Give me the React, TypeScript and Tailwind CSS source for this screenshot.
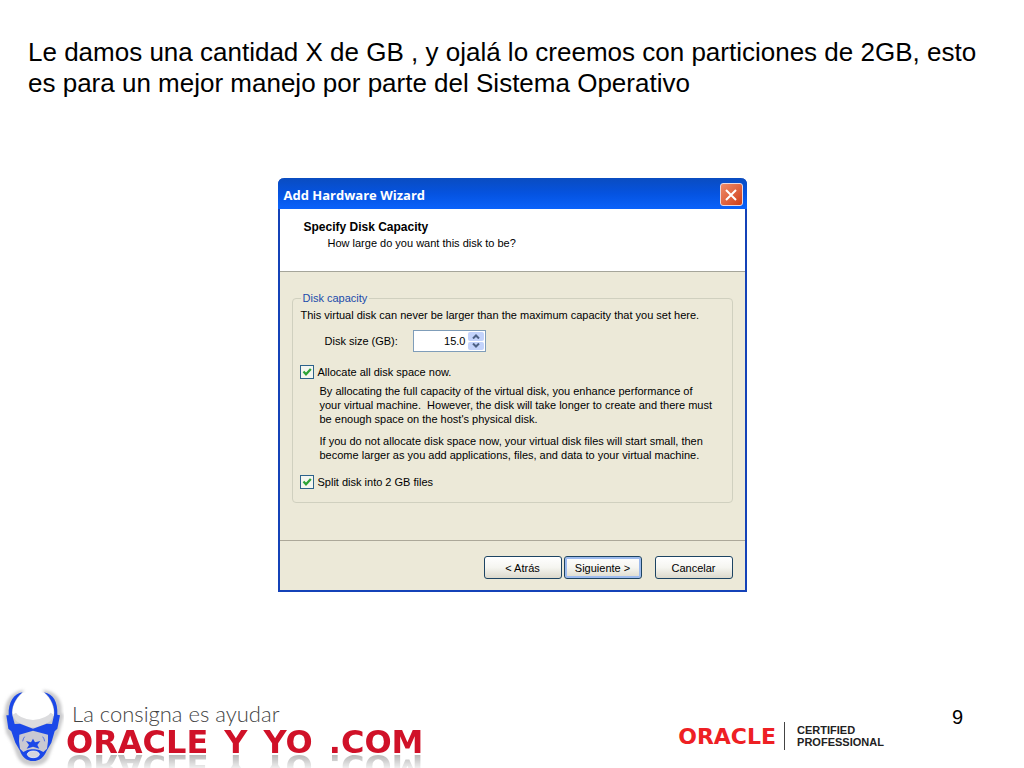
import { useState } from "react";

function Mascot() {
  return (
    <svg viewBox="0 0 192 264" className="h-[88px] w-16 shrink-0" role="img" aria-label="Oracle y yo">
      <defs>
        <filter id="halo" x="-20%" y="-20%" width="140%" height="140%">
          <feGaussianBlur stdDeviation="4" />
        </filter>
      </defs>
      <path
        d="M66 34C34 40 16 68 18 104L14 108L22 158L40 188L54 226C64 252 84 254 99 254C120 254 138 248 144 226L158 188L174 158L188 108L182 98C184 62 166 38 134 34L154 78L148 120L99 138L50 120L44 78Z"
        fill="#cacacc"
        stroke="#cacacc"
        strokeWidth="7"
        filter="url(#halo)"
      />
      <path d="M68 38C46 56 34 84 38 106L60 128L99 142L140 128L161 106C164 84 152 54 132 38Z" fill="#fff" />
      <path d="M38 104Q42 120 60 130L99 146L140 130Q158 120 161 104L152 98Q142 114 99 120Q56 114 48 98Z" fill="#dcdcde" />
      <path d="M52 150L99 142L150 150L146 204L126 240L99 242L74 240L56 204Z" fill="#c9c9d2" />
      <path
        d="M68 37C42 40 24 66 26 106L19 106L25 146L34 154L46 188L60 212C66 230 80 243 99 243C120 243 132 230 140 212L154 188L164 154L172 146L180 106L172 104C174 66 160 42 132 37C154 54 166 82 162 106L156 132L140 131L99 146L60 131L44 132L37 106C33 84 44 56 68 37Z M58 164L99 152L144 164L144 184L141 206L130 216Q116 206 99 208Q84 206 70 216L60 206L57 184Z"
        fill="#1b48e8"
        fillRule="evenodd"
      />
      <path d="M99 176L105 187L121 183L112 195L118 206L99 200L80 206L87 195L78 183L93 187Z" fill="#1b48e8" />
      <path d="M68 184Q69 176 74 170M134 184Q133 176 128 170" fill="none" stroke="#1b48e8" strokeWidth="2" />
      <ellipse cx="100" cy="223" rx="18" ry="10" fill="#d5d5dd" stroke="#fff" strokeWidth="2" />
    </svg>
  );
}

type CheckProps = {
  label: string;
  checked: boolean;
  onChange: (checked: boolean) => void;
};

function Check({ label, checked, onChange }: CheckProps) {
  return (
    <label className="flex h-4 items-center gap-1">
      <span className="grid size-[14px] shrink-0 place-items-center">
        <input
          type="checkbox"
          checked={checked}
          onChange={(e) => onChange(e.target.checked)}
          className="peer col-start-1 row-start-1 size-[14px] appearance-none border border-[#2c628b] bg-[#f4f6ef]"
        />
        <svg
          viewBox="0 0 10 10"
          className="pointer-events-none invisible col-start-1 row-start-1 size-[10px] peer-checked:visible"
        >
          <path d="M1.5 4.5L4 7.3L8.8 2" fill="none" stroke="#2ba336" strokeWidth="2.2" />
        </svg>
      </span>
      <span>{label}</span>
    </label>
  );
}

const buttonClass =
  "h-[23px] w-[78px] rounded-[3px] border border-[#1d4463] bg-linear-to-b from-white via-[#f5f5f0] to-[#dcd9cc]";

function Wizard() {
  const [size, setSize] = useState(15);
  const [allocate, setAllocate] = useState(true);
  const [split, setSplit] = useState(true);

  return (
    <section className="mx-auto w-[469px] rounded-t-md border-x-2 border-b-2 border-[#1442b8] bg-[#ece9d8] text-[11px] leading-[14px]">
      <header className="-mx-0.5 flex h-[31px] items-center justify-between rounded-t-md bg-linear-to-b from-[#0a4cc0] via-[#0553e0] to-[#0a62fb] pt-0.5 pr-1 pl-1.5">
        <h2 className="font-['Open_Sans'] text-[13px] font-bold text-white">Add Hardware Wizard</h2>
        <button
          type="button"
          aria-label="Close"
          className="grid size-[23px] place-items-center rounded-[3px] border border-[#e8d8e0] bg-linear-to-br from-[#ee8a68] to-[#d03c10]"
        >
          <svg viewBox="0 0 12 12" className="size-3">
            <path d="M1 1L11 11M11 1L1 11" stroke="#fff" strokeWidth="2" />
          </svg>
        </button>
      </header>

      <div className="h-[63px] border-b border-[#a5a59a] bg-white pt-[10px] pl-6">
        <h3 className="text-xs leading-4 font-bold">Specify Disk Capacity</h3>
        <p className="pl-6 leading-4">How large do you want this disk to be?</p>
      </div>

      <div className="px-3 pt-[19px] pb-[37px]">
        <fieldset className="rounded-sm border border-[#d0d0bf] pr-1 pb-3 pl-2">
          <legend className="px-0.5 text-[#1b4bab]">Disk capacity</legend>
          <p className="mt-[3px]">This virtual disk can never be larger than the maximum capacity that you set here.</p>
          <div className="mt-2 flex items-center pl-6">
            <label htmlFor="disk-size" className="w-[88px]">
              Disk size (GB):
            </label>
            <div className="flex h-[22px] w-[73px] border border-[#7f9db9] bg-white p-px">
              <input
                id="disk-size"
                value={size.toFixed(1)}
                onChange={(e) => setSize(Number(e.target.value) || 0)}
                className="w-full min-w-0 pr-0.5 text-right outline-none"
              />
              <div className="flex w-4 shrink-0 flex-col gap-px">
                <button
                  type="button"
                  aria-label="Increase"
                  onClick={() => setSize(size + 1)}
                  className="grid flex-1 place-items-center rounded-xs bg-[#c3d3fb]"
                >
                  <svg viewBox="0 0 8 5" className="h-[5px] w-2">
                    <path d="M1 4.5L4 1.5L7 4.5" fill="none" stroke="#4d6185" strokeWidth="2" />
                  </svg>
                </button>
                <button
                  type="button"
                  aria-label="Decrease"
                  onClick={() => setSize(size - 1)}
                  className="grid flex-1 place-items-center rounded-xs bg-[#c3d3fb]"
                >
                  <svg viewBox="0 0 8 5" className="h-[5px] w-2">
                    <path d="M1 0.5L4 3.5L7 0.5" fill="none" stroke="#4d6185" strokeWidth="2" />
                  </svg>
                </button>
              </div>
            </div>
          </div>
          <div className="mt-3 -ml-px">
            <Check label="Allocate all disk space now." checked={allocate} onChange={setAllocate} />
          </div>
          <div className="mt-1 space-y-2 pl-[19px]">
            <p>
              By allocating the full capacity of the virtual disk, you enhance performance of
              <br />
              your virtual machine.&nbsp; However, the disk will take longer to create and there must
              <br />
              be enough space on the host's physical disk.
            </p>
            <p>
              If you do not allocate disk space now, your virtual disk files will start small, then
              <br />
              become larger as you add applications, files, and data to your virtual machine.
            </p>
          </div>
          <div className="mt-3 -ml-px">
            <Check label="Split disk into 2 GB files" checked={split} onChange={setSplit} />
          </div>
        </fieldset>
      </div>

      <footer className="flex justify-end border-t border-[#aca899] pt-[15px] pr-3 pb-[11px]">
        <button type="button" className={buttonClass}>
          &lt; Atrás
        </button>
        <button type="button" className={`${buttonClass} ml-0.5 ring-2 ring-[#9dbbee] ring-inset`}>
          Siguiente &gt;
        </button>
        <button type="button" className={`${buttonClass} ml-[13px]`}>
          Cancelar
        </button>
      </footer>
    </section>
  );
}

export default function App() {
  return (
    <main className="flex min-h-screen flex-col bg-white font-['Liberation_Sans',Arial,sans-serif] text-black">
      <h1 className="pt-[37px] pr-10 pb-[79px] pl-7 text-[26px] leading-[31px]">
        Le damos una cantidad X de GB , y ojalá lo creemos con particiones de 2GB, esto es para un mejor manejo por
        parte del Sistema Operativo
      </h1>

      <Wizard />

      <footer className="mt-auto flex h-[88px] overflow-hidden">
        <Mascot />
        <div className="pt-5 pl-0.5">
          <p className="pl-1.5 font-[Lato] text-[22px] leading-7 font-light text-[#444]">La consigna es ayudar</p>
          <div className="relative">
            {/* mirrored below, then greyed by the overlay */}
            <p className="flex gap-4 pt-px font-['DejaVu_Sans'] text-[32px] leading-[26px] font-bold text-[#d01128] [-webkit-box-reflect:below_-2px_linear-gradient(transparent_30%,rgb(0_0_0/0.4))]">
              <span>ORACLE</span>
              <span>Y</span>
              <span>YO</span>
              <span>.COM</span>
            </p>
            <div className="absolute inset-x-0 top-[26px] h-4 backdrop-grayscale" />
          </div>
        </div>
        <div className="mt-[42px] ml-auto flex h-[28px] items-center">
          <p className="pr-2 font-['DejaVu_Sans'] text-[22px] font-bold text-[#ee2024]">ORACLE</p>
          <div className="border-l border-[#444] py-0.5 pl-3 text-[11px] leading-3 font-bold text-[#222]">
            <p>CERTIFIED</p>
            <p>PROFESSIONAL</p>
          </div>
        </div>
        <p className="pt-[25px] pr-[61px] pl-17 text-xl leading-6">9</p>
      </footer>
    </main>
  );
}
